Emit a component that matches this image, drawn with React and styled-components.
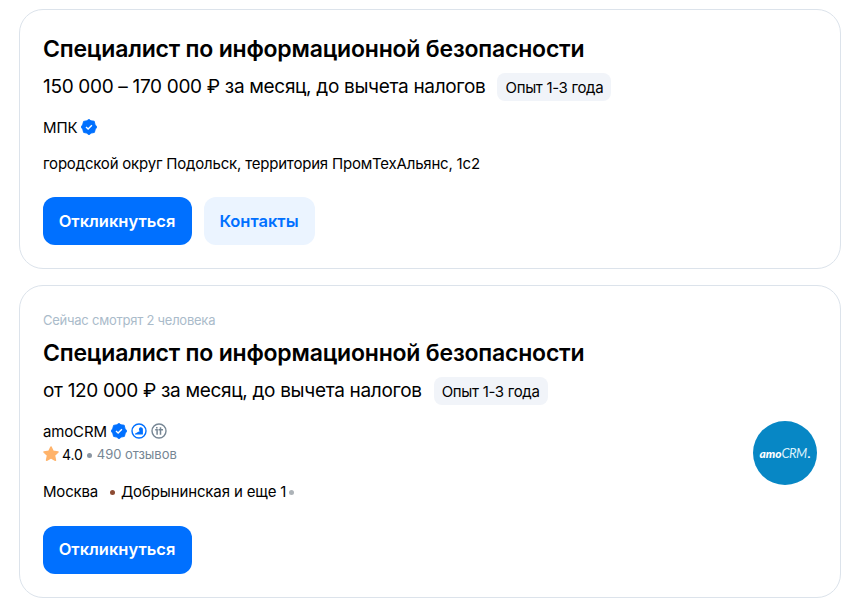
import React from 'react';
import styled, { createGlobalStyle } from 'styled-components';

const vacancies = [
  {
    id: 1,
    title: 'Специалист по информационной безопасности',
    salary: '150 000 – 170 000 ₽ за месяц, до вычета налогов',
    company: 'МПК',
    address: 'городской округ Подольск, территория ПромТехАльянс, 1с2',
    contacts: true,
  },
  {
    id: 2,
    title: 'Специалист по информационной безопасности',
    salary: 'от 120 000 ₽ за месяц, до вычета налогов',
    company: 'amoCRM',
    viewers: 'Сейчас смотрят 2 человека',
    rating: '4.0',
    reviews: '490 отзывов',
    city: 'Москва',
    metro: 'Добрынинская и еще 1',
    logo: true,
  },
];

function VerifiedIcon() {
  return (
    <svg width='16' height='16' viewBox='0 0 16 16'>
      <path
        d='M8 0.4 L10 1.8 L13.2 2.2 L14 5.4 L15.7 8 L14.2 10.6 L13.4 13.4 L10.3 14.1 L8 15.7 L5.6 14.1 L2.6 13.4 L1.8 10.5 L0.3 8 L1.8 5.3 L2.6 2.4 L5.7 1.8 Z'
        fill='#0070ff'
        stroke='#0070ff'
        strokeWidth='0.9'
        strokeLinejoin='round'
      />
      <path d='M5 8.1 L7.1 10 L10.9 6.3' fill='none' stroke='#fff' strokeWidth='1.4' />
    </svg>
  );
}

function HrIcon() {
  return (
    <svg width='16' height='16' viewBox='0 0 16 16'>
      <circle cx='8' cy='8' r='7' fill='none' stroke='#0070ff' strokeWidth='1.4' />
      <path
        d='M4 11.6 V10.4 C5.4 10.4 6 9.2 7.4 8.8 L8.8 8.2 C7.4 7 7.8 4.2 9.8 4.2 C11.2 4.2 11.9 5.2 11.9 6.4 V11.6 Z'
        fill='#0070ff'
      />
    </svg>
  );
}

function ItIcon() {
  return (
    <svg width='16' height='16' viewBox='0 0 16 16'>
      <circle cx='8' cy='8' r='7' fill='none' stroke='#768694' strokeWidth='1.4' />
      <path
        d='M4.2 6.8 H6.1 V11.8 M5.8 4.1 V5.6 M9.5 4.3 V11.8 M7.5 6.8 H12'
        fill='none'
        stroke='#768694'
        strokeWidth='1.5'
      />
    </svg>
  );
}

function StarIcon() {
  return (
    <svg width='16' height='16' viewBox='0 0 16 16'>
      <path
        d='M8 1 L10.1 5.4 L15 6 L11.4 9.3 L12.4 14.2 L8 11.8 L3.6 14.2 L4.6 9.3 L1 6 L5.9 5.4 Z'
        fill='#ffb36a'
        stroke='#ffb36a'
        strokeWidth='1.6'
        strokeLinejoin='round'
      />
    </svg>
  );
}

function VacancyCard({ vacancy }) {
  return (
    <Card>
      {vacancy.viewers && <Viewers>{vacancy.viewers}</Viewers>}
      <Title>{vacancy.title}</Title>
      <SalaryRow>
        <Salary>{vacancy.salary}</Salary>
        <Tag>Опыт 1-3 года</Tag>
      </SalaryRow>
      <Details>
        <div>
          <CompanyRow>
            <Company>{vacancy.company}</Company>
            <VerifiedIcon />
            {vacancy.rating && <HrIcon />}
            {vacancy.rating && <ItIcon />}
          </CompanyRow>
          {vacancy.rating && (
            <RatingRow>
              <StarIcon />
              <Rating>{vacancy.rating}</Rating>
              <Dot $color='#8a96a3' />
              <Reviews>{vacancy.reviews}</Reviews>
            </RatingRow>
          )}
          {vacancy.address && (
            <AddressRow>
              <Address>{vacancy.address}</Address>
            </AddressRow>
          )}
          {vacancy.city && (
            <AddressRow $top={17} $bottom={1}>
              <City>{vacancy.city}</City>
              <Dot $color='#8d4b33' />
              <Metro>{vacancy.metro}</Metro>
              <Dot $color='#adb3b8' />
            </AddressRow>
          )}
        </div>
        {vacancy.logo && (
          <Logo>
            <LogoText>amo</LogoText>
            <LogoScript>CRM</LogoScript>
            <LogoText>.</LogoText>
          </Logo>
        )}
      </Details>
      <Actions>
        <ApplyButton $raise={vacancy.contacts ? 0 : 2}>Откликнуться</ApplyButton>
        {vacancy.contacts && <ContactsButton>Контакты</ContactsButton>}
      </Actions>
    </Card>
  );
}

function App() {
  return (
    <>
      <GlobalStyle />
      <List>
        {vacancies.map((vacancy) => (
          <VacancyCard key={vacancy.id} vacancy={vacancy} />
        ))}
      </List>
    </>
  );
}

export default App;

const GlobalStyle = createGlobalStyle`
  * {
    box-sizing: border-box;
  }
  body {
    margin: 0;
    background: #fff;
    color: #000;
    font-family: Inter, 'Liberation Sans', sans-serif;
  }
`;

const List = styled.div`
  display: flex;
  flex-direction: column;
  gap: 16px;
  width: 850px;
  height: 606px;
  padding: 9px 9px 0 19px;
  overflow: hidden;
`;

const Card = styled.section`
  padding: 23px;
  border: 1px solid #dce3eb;
  border-radius: 24px;
  white-space: nowrap;
`;

const Viewers = styled.p`
  width: max-content;
  margin: 1px 0 7px;
  font-size: 13px;
  line-height: 20px;
  letter-spacing: -0.24px;
  color: #aabbca;
`;

const Title = styled.h2`
  width: max-content;
  margin: 0;
  font-size: 23px;
  font-weight: 600;
  line-height: 32px;
  letter-spacing: -0.2px;
`;

const SalaryRow = styled.div`
  display: flex;
  align-items: center;
  gap: 12px;
  height: 28px;
  margin-top: 8px;
`;

const Salary = styled.span`
  font-size: 19px;
  line-height: 26px;
  letter-spacing: -0.32px;
`;

const Tag = styled.span`
  height: 28px;
  padding: 1px 8px 0;
  border-radius: 8px;
  background: #f1f4f9;
  font-size: 15px;
  line-height: 28px;
  letter-spacing: -0.32px;
`;

const Details = styled.div`
  display: flex;
  justify-content: space-between;
  margin-top: 16px;
`;

const CompanyRow = styled.div`
  display: flex;
  align-items: center;
  gap: 4px;
  height: 20px;
`;

const Company = styled.span`
  padding-top: 2px;
  font-size: 15px;
  line-height: 20px;
  letter-spacing: -0.15px;
`;

const RatingRow = styled.div`
  display: flex;
  align-items: center;
  height: 20px;
  margin-top: 3px;
`;

const Rating = styled.span`
  margin: 0 4px 0 3px;
  font-size: 14px;
  letter-spacing: -0.1px;
`;

const Reviews = styled.span`
  margin-left: 5px;
  font-size: 13px;
  letter-spacing: -0.05px;
  color: #768694;
`;

const Dot = styled.i`
  width: 5px;
  height: 5px;
  margin-top: 3px;
  border-radius: 50%;
  background: ${({ $color }) => $color};
`;

const AddressRow = styled.div`
  display: flex;
  align-items: center;
  height: 20px;
  margin-top: ${({ $top = 16 }) => $top}px;
  margin-bottom: ${({ $bottom = 0 }) => $bottom}px;
`;

const Address = styled.span`
  font-size: 15px;
  letter-spacing: -0.2px;
`;

const City = styled(Address)`
  margin-right: 12px;
`;

const Metro = styled(Address)`
  margin: 0 3px 0 6px;
  letter-spacing: -0.13px;
`;

const Logo = styled.div`
  display: flex;
  align-items: center;
  justify-content: center;
  width: 64px;
  height: 64px;
  border-radius: 50%;
  background: #0787c5;
  color: #fff;
`;

const LogoText = styled.b`
  font-family: Lato, sans-serif;
  font-size: 12px;
  font-style: italic;
  font-weight: 900;
`;

const LogoScript = styled.span`
  margin-right: 1px;
  font-family: Lato, sans-serif;
  font-size: 13px;
  font-style: italic;
  letter-spacing: -0.6px;
  color: #d9f0fb;
`;

const Actions = styled.div`
  display: flex;
  gap: 12px;
  margin-top: 24px;
`;

const ApplyButton = styled.button`
  width: 149px;
  height: 48px;
  padding: 0 1px ${({ $raise = 0 }) => $raise}px 0;
  border: none;
  border-radius: 12px;
  background: #0070ff;
  color: #fff;
  font-family: inherit;
  font-size: 16.5px;
  font-weight: 600;
`;

const ContactsButton = styled(ApplyButton)`
  width: 111px;
  background: #ebf4ff;
  color: #0070ff;
`;
